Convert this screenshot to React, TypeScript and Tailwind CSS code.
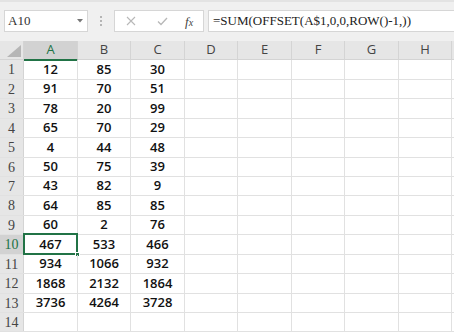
import React from 'react';

const COLS = ['A', 'B', 'C', 'D', 'E', 'F', 'G', 'H'];
const COL_W = ['w-[54px]', 'w-[53px]', 'w-[54px]', 'w-[53px]', 'w-[54px]', 'w-[53px]', 'w-[54px]', 'w-[53px]'];
const ROW_H = ['h-[20px]', 'h-[19px]', 'h-[20px]', 'h-[19px]', 'h-[20px]', 'h-[19px]', 'h-[19px]', 'h-[20px]', 'h-[19px]', 'h-[20px]', 'h-[19px]', 'h-[20px]', 'h-[19px]', 'h-[19px]'];

const DATA: (number | null)[][] = [
  [12, 85, 30],
  [91, 70, 51],
  [78, 20, 99],
  [65, 70, 29],
  [4, 44, 48],
  [50, 75, 39],
  [43, 82, 9],
  [64, 85, 85],
  [60, 2, 76],
  [467, 533, 466],
  [934, 1066, 932],
  [1868, 2132, 1864],
  [3736, 4264, 3728],
  [null, null, null],
];

const serif = "font-['Liberation_Serif',serif]";

const FormulaBar: React.FC = () => (
  <div className="h-[41px] bg-[#f0f0f0] border-t-2 border-[#e3e3e3] flex items-start pt-[8px]">
    {/* Name Box */}
    <div className="ml-[4px] w-[84px] h-[22px] bg-white border border-[#d6d6d6] flex items-center justify-between pl-[3px] pr-[4px]">
      <span className={`${serif} text-[13px] text-[#333]`}>A10</span>
      <svg width="6" height="4" viewBox="0 0 6 4"><path d="M0 0h6L3 3.5z" fill="#777" /></svg>
    </div>
    {/* Divider dots */}
    <div className="w-[26px] h-[22px] flex flex-col items-center justify-center gap-[2px]">
      <span className="w-[2px] h-[2px] bg-[#b5b5b5]" />
      <span className="w-[2px] h-[2px] bg-[#b5b5b5]" />
      <span className="w-[2px] h-[2px] bg-[#b5b5b5]" />
    </div>
    {/* Cancel / Enter / fx */}
    <div className="w-[90px] h-[22px] bg-white border border-[#d6d6d6] flex items-center">
      <svg className="ml-[11px]" width="10" height="10" viewBox="0 0 10 10">
        <path d="M1 1l8 8M9 1l-8 8" stroke="#b8b8b8" strokeWidth="1.1" />
      </svg>
      <svg className="ml-[21px]" width="11" height="9" viewBox="0 0 11 9">
        <path d="M1 4.5l3 3L10 1" stroke="#b8b8b8" strokeWidth="1.3" fill="none" />
      </svg>
      <span className={`${serif} italic ml-[17px] text-[13px] text-[#444] leading-none`}>
        f<span className="text-[10px]">x</span>
      </span>
    </div>
    {/* Formula input */}
    <div className="ml-[4px] flex-1 h-[22px] bg-white border border-[#d6d6d6] border-r-0 flex items-center pl-[4px]">
      <span className={`${serif} text-[13px] text-[#222]`}>=SUM(OFFSET(A$1,0,0,ROW()-1,))</span>
    </div>
  </div>
);

const HeaderRow: React.FC = () => (
  <div className="flex h-[19px] bg-[#e6e6e6] border-b border-[#d4d4d4]">
    <div className="w-[24px] shrink-0 border-r border-[#d4d4d4] relative">
      <svg className="absolute right-[2px] bottom-[2px]" width="14" height="12" viewBox="0 0 14 12">
        <path d="M14 0V12H0z" fill="#b6b6b6" />
      </svg>
    </div>
    {COLS.map((c, i) => (
      <div
        key={c}
        className={`${COL_W[i]} shrink-0 border-r border-[#d4d4d4] flex items-center justify-center font-['Open_Sans',sans-serif] text-[13px] ${
          i === 0 ? 'bg-[#d2d2d2] text-[#217346] border-b-2 border-b-[#217346] h-[20px]' : 'text-[#444]'
        }`}
      >
        {c}
      </div>
    ))}
    <div className="flex-1" />
  </div>
);

export default function App() {
  return (
    <div className="w-[454px] h-[332px] overflow-hidden bg-white">
      <FormulaBar />
      <HeaderRow />
      {DATA.map((row, r) => {
        const selected = r === 9;
        return (
          <div key={r} className={`flex ${ROW_H[r]} border-b border-[#e1e1e1]`}>
            <div
              className={`w-[24px] shrink-0 flex items-center justify-center ${serif} text-[14px] border-r ${
                selected ? 'bg-[#d2d2d2] text-[#217346] border-[#217346]' : 'bg-[#e6e6e6] text-[#444] border-[#d4d4d4]'
              }`}
            >
              {r + 1}
            </div>
            {COLS.map((c, i) => (
              <div
                key={c}
                className={`${COL_W[i]} shrink-0 border-r border-[#e1e1e1] relative flex items-center justify-center font-['Open_Sans',sans-serif] font-semibold text-[13px] text-[#111]`}
              >
                {i < 3 && row[i] !== null ? row[i] : ''}
                {selected && i === 0 && (
                  <>
                    <div className="absolute -left-[1px] -top-[2px] -right-[1px] -bottom-[1px] border-2 border-[#217346]" />
                    <div className="absolute -right-[3px] -bottom-[3px] w-[5px] h-[5px] bg-[#217346] border border-white" />
                  </>
                )}
              </div>
            ))}
            <div className="flex-1" />
          </div>
        );
      })}
    </div>
  );
}
